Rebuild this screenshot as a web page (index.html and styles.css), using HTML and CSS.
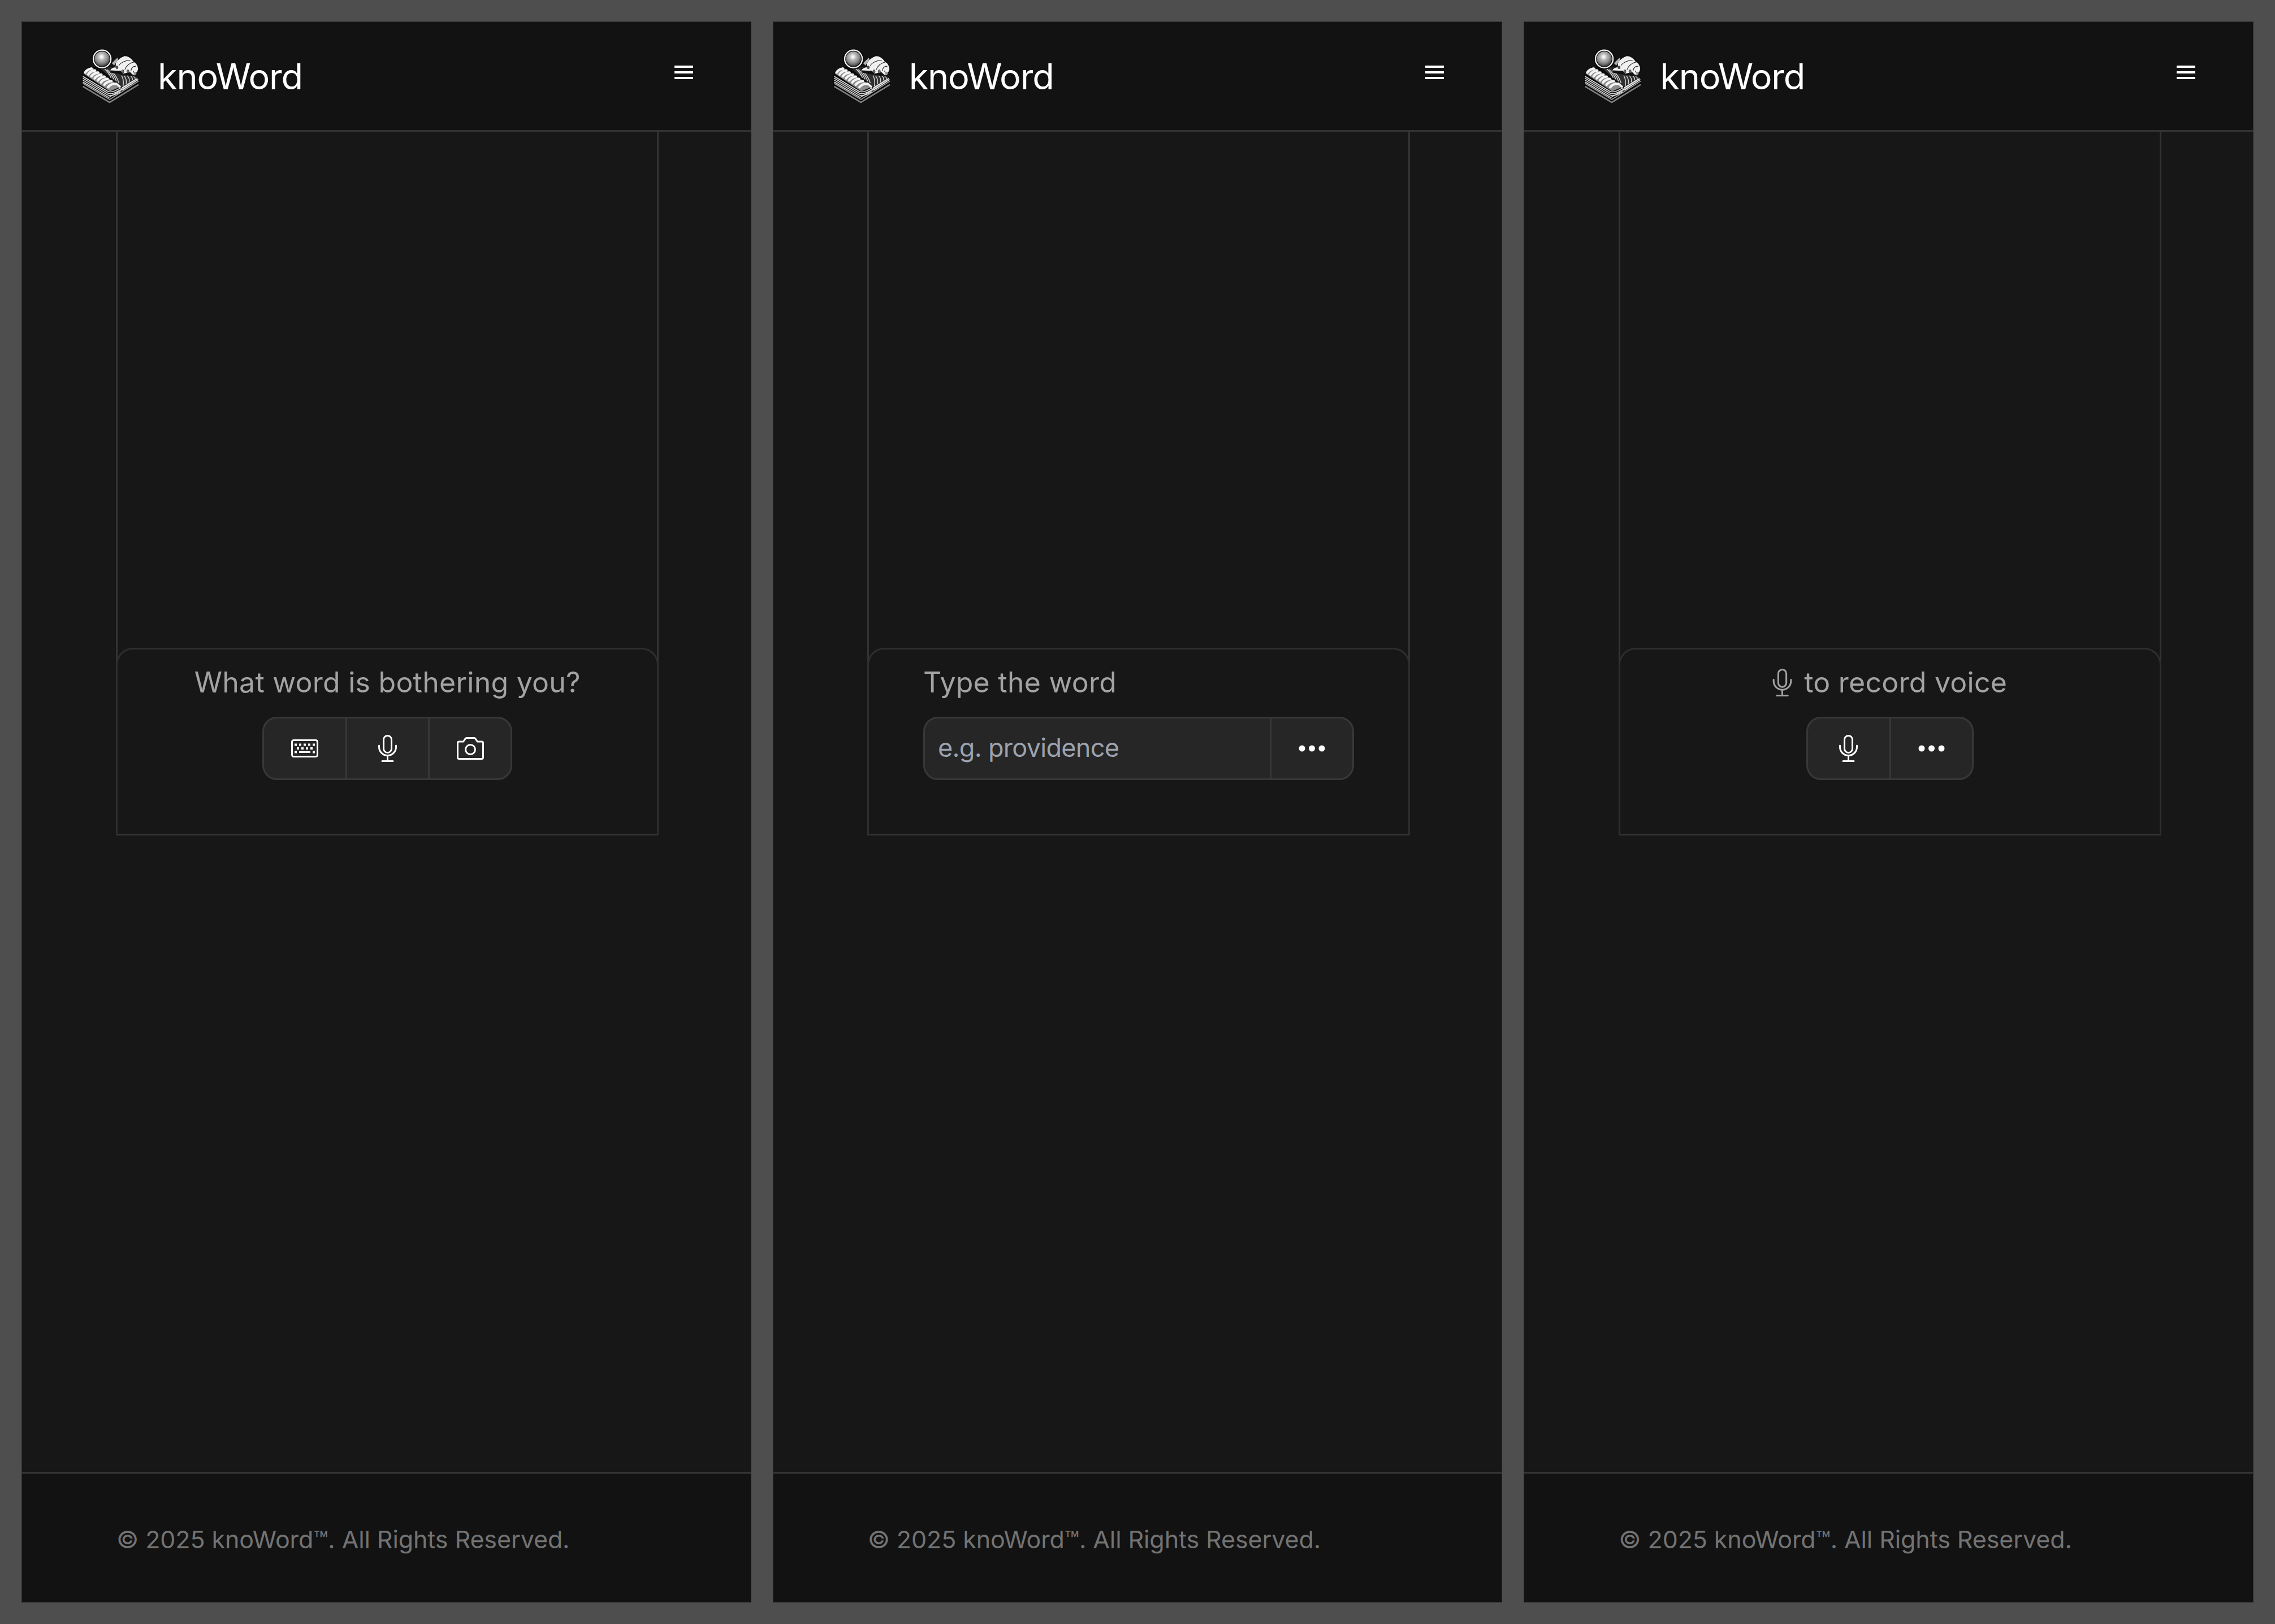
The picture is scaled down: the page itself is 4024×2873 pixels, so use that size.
FILE: index.html
```html
<!DOCTYPE html>
<html>
<head>
	<title>knoWord</title>
	<link rel="stylesheet" href="styles.css">
</head>
<body>

<svg class="defs" width="0" height="0">
	<defs>
		<radialGradient id="lens" cx="46%" cy="36%" r="68%">
			<stop offset="0" stop-color="#fafafa"/>
			<stop offset="0.18" stop-color="#e2e2e2"/>
			<stop offset="0.3" stop-color="#bcbcbc"/>
			<stop offset="0.62" stop-color="#8a8a8a"/>
			<stop offset="1" stop-color="#2e2e2e"/>
		</radialGradient>
		<symbol id="logo" viewBox="40 25 310 290">
			<path d="M42 160 Q50 135 90 120 L210 130 L340 175 L349 218 L190 315 L42 228 Z" fill="#0a0a0a"/>
			<path d="M47 224 L190 309 L345 214" fill="none" stroke="#808080" stroke-width="8" stroke-linejoin="round"/>
			<path d="M47 208 L190 294 L345 196" fill="none" stroke="#a0a0a0" stroke-width="5" stroke-linejoin="round"/>
			<g fill="none" stroke="#d8d8d8" stroke-width="5">
				<path d="M47 170 L180 250 Q196 258 222 246 L250 232"/>
				<path d="M47 180 L180 260 Q196 268 222 256 L250 242"/>
				<path d="M47 190 L180 270 Q196 278 222 266 L250 252"/>
				<path d="M47 200 L185 283 L255 242"/>
			</g>
			<path d="M246 246 L262 244 L345 190 L336 178 L258 226 Z" fill="#e8e8e8"/>
			<path d="M256 238 L340 186" fill="none" stroke="#444" stroke-width="2.500"/>
			<path d="M50 155 Q56 135 92 121 L250 225 L192 250 Z" fill="#8c8c8c"/>
			<g fill="none" stroke="#f4f4f4" stroke-linecap="round" stroke-width="13">
				<path d="M60 149 Q70 132 94 129"/>
				<path d="M76 160 Q88 141 112 139"/>
				<path d="M93 170 Q105 152 129 150"/>
				<path d="M110 181 Q122 163 146 161"/>
				<path d="M127 192 Q139 174 163 172"/>
				<path d="M144 203 Q156 185 180 184"/>
				<path d="M162 215 Q176 197 200 196"/>
				<path d="M182 228 Q198 208 226 210 Q238 214 244 224"/>
			</g>
			<path d="M135 125 L225 120 L340 175 L336 180 L256 228 Z" fill="#303030"/>
			<g fill="none" stroke="#d4d4d4" stroke-width="4.500">
				<path d="M162 128 Q186 150 198 178"/>
				<path d="M176 134 Q200 156 212 186"/>
				<path d="M190 140 Q214 162 226 196"/>
				<path d="M204 146 Q228 170 240 206"/>
				<path d="M254 166 Q268 190 262 222"/>
				<path d="M268 168 Q284 188 278 212"/>
				<path d="M284 166 Q300 182 294 202"/>
				<path d="M300 166 Q316 178 310 192"/>
				<path d="M316 168 Q328 176 326 184"/>
			</g>
			<path d="M190 128 L218 118 L205 100 L240 60 L275 54 L310 62 L330 90 L350 112 L350 145 L330 172 L250 160 L195 150 Z" fill="#111"/>
			<path d="M193 138 Q200 124 222 122 L224 98 Q240 72 270 62 Q298 62 318 92 Q340 104 342 130 Q340 148 328 152 Q326 166 314 162 L300 148 L262 156 L248 140 L225 140 Z" fill="#f0f0f0"/>
			<g fill="none" stroke="#222" stroke-width="3.500" stroke-linecap="round">
				<path d="M240 112 Q256 88 300 84"/>
				<path d="M272 134 Q282 104 318 94"/>
				<path d="M304 140 Q308 116 330 116"/>
				<path d="M316 142 L322 152"/>
			</g>
			<path d="M320 150 Q330 142 334 152 Q332 168 318 164 Z" fill="#9a9a9a"/>
			<path d="M202 100 L232 70 L236 82 L214 112 Z" fill="#b4b4b4"/>
			<ellipse cx="229" cy="122" rx="6" ry="8" fill="#555" stroke="#111" stroke-width="2"/>
			<ellipse cx="260" cy="144" rx="6" ry="9" fill="#777" stroke="#111" stroke-width="2"/>
			<ellipse cx="288" cy="144" rx="6" ry="9" fill="#777" stroke="#111" stroke-width="2"/>
			<circle cx="150" cy="77" r="56" fill="#0a0a0a"/>
			<circle cx="150" cy="77" r="40" fill="url(#lens)"/>
			<circle cx="150" cy="77" r="47" fill="none" stroke="#f2f2f2" stroke-width="7"/>
		</symbol>
		<symbol id="mic" viewBox="0 0 33 48">
			<g fill="none" stroke="currentColor" stroke-width="3" stroke-linecap="round">
				<rect x="9.500" y="1.500" width="14" height="30" rx="7"/>
				<path d="M1.500 19v2.500a15 15 0 0 0 30 0V19"/>
				<path d="M16.500 37v9M7 46.500h19"/>
			</g>
		</symbol>
		<symbol id="keyboard" viewBox="0 0 48 32">
			<rect x="1.500" y="1.500" width="45" height="29" rx="3" fill="none" stroke="currentColor" stroke-width="3"/>
			<g fill="currentColor">
				<rect x="6" y="7.500" width="4" height="4"/><rect x="14" y="7.500" width="4" height="4"/><rect x="22" y="7.500" width="4" height="4"/><rect x="30" y="7.500" width="4" height="4"/><rect x="38" y="7.500" width="4" height="4"/>
				<rect x="10" y="14" width="4" height="4"/><rect x="18" y="14" width="4" height="4"/><rect x="26" y="14" width="4" height="4"/><rect x="34" y="14" width="4" height="4"/>
				<rect x="6" y="20.500" width="4" height="4"/><rect x="14" y="21" width="20" height="3"/><rect x="38" y="20.500" width="4" height="4"/>
			</g>
		</symbol>
		<symbol id="camera" viewBox="0 0 48 40">
			<g fill="none" stroke="currentColor" stroke-width="3" stroke-linejoin="round">
				<path d="M4 8h7.500l3.500-5.200a3 3 0 0 1 2-1.300h14a3 3 0 0 1 2 1.300L36.500 8H44a2.500 2.500 0 0 1 2.500 2.500V36a2.500 2.500 0 0 1-2.500 2.500H4A2.500 2.500 0 0 1 1.500 36V10.500A2.500 2.500 0 0 1 4 8z"/>
				<circle cx="24" cy="22" r="8.500"/>
			</g>
		</symbol>
		<symbol id="dots" viewBox="0 0 47 12">
			<g fill="currentColor">
				<circle cx="6" cy="6" r="5.500"/><circle cx="23.500" cy="6" r="5.500"/><circle cx="41" cy="6" r="5.500"/>
			</g>
		</symbol>
	</defs>
</svg>

<div class="screens">

	<div class="screen">
		<div class="topbar">
			<div class="brand">
				<svg class="logo"><use href="#logo"/></svg>
				<span class="brandname">knoWord</span>
			</div>
			<div class="burger"><span></span><span></span><span></span></div>
		</div>
		<div class="main">
			<div class="column">
				<div class="card card-center">
					<div class="label">What word is bothering you?</div>
					<div class="group">
						<button class="btn"><svg class="ico-keyboard"><use href="#keyboard"/></svg></button>
						<button class="btn"><svg class="ico-mic"><use href="#mic"/></svg></button>
						<button class="btn"><svg class="ico-camera"><use href="#camera"/></svg></button>
					</div>
				</div>
			</div>
		</div>
		<div class="footer">© 2025 knoWord™. All Rights Reserved.</div>
	</div>

	<div class="screen">
		<div class="topbar">
			<div class="brand">
				<svg class="logo"><use href="#logo"/></svg>
				<span class="brandname">knoWord</span>
			</div>
			<div class="burger"><span></span><span></span><span></span></div>
		</div>
		<div class="main">
			<div class="column">
				<div class="card">
					<div class="label">Type the word</div>
					<div class="group group-wide">
						<input class="wordinput" type="text" placeholder="e.g. providence">
						<button class="btn"><svg class="ico-dots"><use href="#dots"/></svg></button>
					</div>
				</div>
			</div>
		</div>
		<div class="footer">© 2025 knoWord™. All Rights Reserved.</div>
	</div>

	<div class="screen">
		<div class="topbar">
			<div class="brand">
				<svg class="logo"><use href="#logo"/></svg>
				<span class="brandname">knoWord</span>
			</div>
			<div class="burger"><span></span><span></span><span></span></div>
		</div>
		<div class="main">
			<div class="column">
				<div class="card card-center">
					<div class="label label-icon"><svg class="ico-labelmic"><use href="#mic"/></svg>to record voice</div>
					<div class="group">
						<button class="btn"><svg class="ico-mic"><use href="#mic"/></svg></button>
						<button class="btn"><svg class="ico-dots"><use href="#dots"/></svg></button>
					</div>
				</div>
			</div>
		</div>
		<div class="footer">© 2025 knoWord™. All Rights Reserved.</div>
	</div>

</div>

</body>
</html>
```
FILE: styles.css
```css
* {
	box-sizing: border-box;
}

body {
	margin: 0;
	background-color: #4e4e4e;
	font-family: "Inter", "Liberation Sans", sans-serif;
}

.defs {
	display: block;
	height: 0;
}

.screens {
	display: grid;
	grid-template-columns: repeat(3, 1fr);
	gap: 38px;
	padding: 38px;
	height: 2873px;
}

.screen {
	display: flex;
	flex-direction: column;
	background-color: #171717;
	border: 1px solid #2c2c2c;
	height: 2797px;
}

.topbar {
	display: flex;
	justify-content: space-between;
	align-items: center;
	height: 194px;
	flex-shrink: 0;
	padding: 0 102px 0 105px;
	background-color: #121212;
	border-bottom: 3px solid #333333;
}

.brand {
	display: flex;
	align-items: center;
	gap: 32px;
}

.logo {
	width: 103px;
	height: 96px;
}

.brandname {
	font-size: 63px;
	letter-spacing: -1.200px;
	color: #ffffff;
}

.burger {
	display: flex;
	flex-direction: column;
	gap: 6px;
	width: 33px;
	margin-bottom: 14px;
}

.burger span {
	height: 4px;
	background-color: #ffffff;
}

.main {
	flex: 1;
	display: flex;
	justify-content: center;
	padding-left: 4px;
}

.column {
	display: flex;
	flex-direction: column;
	justify-content: flex-end;
	width: 960px;
	height: 1245px;
	border: 3px solid #333333;
	border-top: 0;
}

.card {
	display: flex;
	flex-direction: column;
	height: 332px;
	margin: 0 -3px -3px;
	padding: 25px 96px 0;
	border: 3px solid #2e2e2e;
	border-bottom: 3px solid #333333;
	border-radius: 30px 30px 0 0;
}

.card-center {
	align-items: center;
}

.label {
	height: 94px;
	font-size: 50px;
	line-height: 66px;
	letter-spacing: 0.250px;
	color: #a3a3a3;
}

.label-icon {
	display: flex;
	align-items: flex-start;
	gap: 21px;
}

.ico-labelmic {
	width: 35px;
	height: 49px;
	margin-top: 9px;
}

.group {
	display: flex;
	height: 112px;
	background-color: #262626;
	border: 3px solid #383838;
	border-radius: 26px;
	overflow: hidden;
}

.group-wide {
	width: 100%;
}

.btn {
	display: flex;
	align-items: center;
	justify-content: center;
	width: 146px;
	padding: 0;
	background: none;
	border: 0;
	border-left: 3px solid #383838;
	color: #ffffff;
}

.btn:first-child {
	width: 144px;
	border-left: 0;
}

.wordinput {
	flex: 1;
	min-width: 0;
	padding: 0 23px 4px;
	background: none;
	border: 0;
	outline: none;
	font-family: inherit;
	font-size: 45px;
	letter-spacing: -0.700px;
	color: #ffffff;
}

.wordinput::placeholder {
	color: #9ca3af;
	opacity: 1;
}

.ico-keyboard {
	width: 48px;
	height: 32px;
}

.ico-mic {
	width: 33px;
	height: 48px;
}

.ico-camera {
	width: 48px;
	height: 40px;
}

.ico-dots {
	width: 47px;
	height: 12px;
}

.footer {
	display: flex;
	align-items: center;
	height: 230px;
	flex-shrink: 0;
	padding: 4px 0 0 167px;
	background-color: #121212;
	border-top: 3px solid #333333;
	font-size: 43px;
	letter-spacing: -0.100px;
	color: #737373;
}
```
